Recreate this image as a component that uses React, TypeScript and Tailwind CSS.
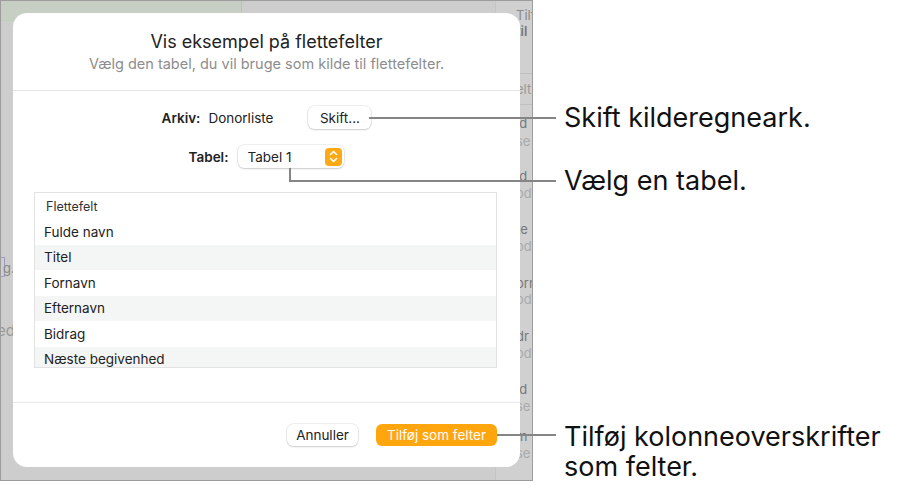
import React from 'react'

const rows = ['Fulde navn', 'Titel', 'Fornavn', 'Efternavn', 'Bidrag', 'Næste begivenhed']

const sideBits = [
  { t: 'Tilføj', y: 6, c: 'text-[#8a8a8a]' },
  { t: 'til', y: 22, c: 'text-[#777] font-semibold' },
  { t: 'elt', y: 80, c: 'text-[#9a9a9a] text-[11px]' },
  { t: 'ld', y: 114, c: 'text-[#777]' },
  { t: 'se', y: 132, c: 'text-[#aaa]' },
  { t: 'ld', y: 167, c: 'text-[#777]' },
  { t: 'odt', y: 184, c: 'text-[#aaa]' },
  { t: 'te', y: 220, c: 'text-[#777]' },
  { t: 'odt', y: 237, c: 'text-[#aaa]' },
  { t: 'orn', y: 274, c: 'text-[#777]' },
  { t: 'odt', y: 290, c: 'text-[#aaa]' },
  { t: 'dr', y: 327, c: 'text-[#777]' },
  { t: 'odt', y: 344, c: 'text-[#aaa]' },
  { t: 'ld', y: 380, c: 'text-[#777]' },
  { t: 'se', y: 397, c: 'text-[#aaa]' },
  { t: 'm', y: 427, c: 'text-[#777]' },
  { t: 'se', y: 444, c: 'text-[#aaa]' },
]

const btn = 'shadow-[0_0_0_0.5px_rgba(0,0,0,0.12),0_1px_2px_rgba(0,0,0,0.15)]'

function Stepper() {
  return (
    <span className="flex h-[18px] w-[17px] items-center justify-center rounded-[4px] bg-[#ffa914]">
      <svg width="9" height="13" viewBox="0 0 9 13" fill="none" stroke="white" strokeWidth="1.6" strokeLinecap="round" strokeLinejoin="round">
        <path d="M1.5 4.5 L4.5 1.5 L7.5 4.5" />
        <path d="M1.5 8.5 L4.5 11.5 L7.5 8.5" />
      </svg>
    </span>
  )
}

export default function App() {
  return (
    <div className="relative h-[497px] w-[899px] overflow-hidden bg-white font-['Inter',sans-serif] text-[#1d1d1f]">
      {/* dimmed screenshot behind the sheet */}
      <div className="relative h-[481px] w-[533px] overflow-hidden border border-[#9c9c9c] bg-[#cdcdcd]">
        <div className="absolute left-0 top-0 h-[20px] w-[240px] border-b border-[#b9d4b4] bg-[#c7cfc5]" />
        <div className="absolute left-[240px] top-0 h-[20px] w-px bg-[#bdbdbd]" />
        <div className="absolute left-[494px] top-0 h-full w-[40px] border-l border-[#c4c4c4] bg-[#d0d0d0]">
          <div className="absolute left-0 right-0 top-[72px] h-px bg-[#c0c0c0]" />
          <div className="absolute left-0 right-0 top-[103px] h-px bg-[#c0c0c0]" />
          {sideBits.map((b, i) => (
            <span key={i} className={`absolute left-[20px] text-[13px] leading-4 ${b.c}`} style={{ top: b.y }}>
              {b.t}
            </span>
          ))}
        </div>
        <span className="absolute left-[-2px] top-[256px] h-[20px] w-[6px] border border-[#9d9dc8]" />
        <span className="absolute left-[2px] top-[259px] text-[13px] leading-4 text-[#888]">g.</span>
        <span className="absolute left-[-4px] top-[320px] text-[15px] leading-5 text-[#999]">ed</span>

        {/* the sheet */}
        <div className="relative ml-[12px] mt-[12px] flex h-[454px] w-[507px] flex-col rounded-[14px] bg-white">
          <div className="flex h-[78px] flex-col items-center border-b border-[#e6e6e6] pt-[17px]">
            <div className="text-[18px] leading-6 text-[#222]">Vis eksempel på flettefelter</div>
            <div className="mt-[1px] text-[14.5px] leading-[17px] text-[#8d8d8d]">Vælg den tabel, du vil bruge som kilde til flettefelter.</div>
          </div>

          <div className="mt-[15px] flex items-center justify-center text-[13.5px] leading-4">
            <span className="font-semibold text-[#222]">Arkiv:</span>
            <span className="ml-[8px] text-[#222]">Donorliste</span>
            <span className={`ml-[35px] flex h-[23px] w-[63px] items-center justify-center rounded-[6px] bg-white text-[#222] ${btn}`}>
              Skift...
            </span>
          </div>

          <div className="mt-[16px] flex items-center justify-center text-[13.5px] leading-4">
            <span className="font-semibold text-[#222]">Tabel:</span>
            <span className={`ml-[10px] flex h-[23px] w-[106px] items-center justify-between rounded-[6px] bg-white pl-[9px] pr-[2px] text-[#222] ${btn}`}>
              Tabel 1
              <Stepper />
            </span>
          </div>

          <div className="ml-[21px] mt-[24px] h-[176px] w-[463px] overflow-hidden border border-[#e2e2e2]">
            <div className="flex h-[30px] items-center border-b border-[#e2e2e2] pl-[11px] text-[12.5px] text-[#333]">Flettefelt</div>
            <div className="-mt-[4px]">
              {rows.map((r, i) => (
                <div key={r} className={`flex h-[25.5px] items-center pl-[9px] text-[13.5px] text-[#222] ${i % 2 === 1 ? 'bg-[#f4f5f5]' : 'bg-white'}`}>
                  {r}
                </div>
              ))}
            </div>
          </div>

          <div className="mt-[34px] border-t border-[#e8e8e8]" />

          <div className="mr-[23px] mt-[21px] flex justify-end gap-[18px] text-[13.5px]">
            <span className={`flex h-[22px] w-[71px] items-center justify-center rounded-[6px] bg-white text-[#222] ${btn}`}>
              Annuller
            </span>
            <span className="flex h-[22px] w-[121px] items-center justify-center rounded-[6px] bg-[#ffa60f] text-white">
              Tilføj som felter
            </span>
          </div>
        </div>
      </div>

      {/* callout leader lines */}
      <div className="absolute left-[369px] top-[117px] h-[2px] w-[187px] bg-[#858585]" />
      <div className="absolute left-[289px] top-[168px] h-[14px] w-[2px] bg-[#858585]" />
      <div className="absolute left-[289px] top-[180px] h-[2px] w-[267px] bg-[#858585]" />
      <div className="absolute left-[497px] top-[434px] h-[2px] w-[59px] bg-[#858585]" />

      {/* callout labels */}
      <div className="absolute left-[564px] top-0 flex w-[335px] flex-col text-[27px] leading-[30px] text-[#111]">
        <div className="mt-[103px]">Skift kilderegneark.</div>
        <div className="mt-[33px]">Vælg en tabel.</div>
        <div className="mt-[226px]">Tilføj kolonneoverskrifter<br />som felter.</div>
      </div>
    </div>
  )
}
